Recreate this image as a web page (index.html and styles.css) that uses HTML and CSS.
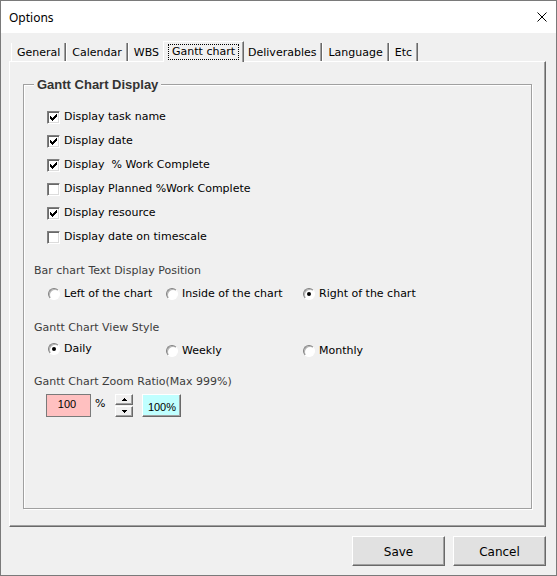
FILE: index.html
```html
<!DOCTYPE html>
<html lang="en">
<head>
<meta charset="utf-8">
<title>Options</title>
<link rel="stylesheet" href="styles.css">
</head>
<body>
<div class="window">
  <div class="titlebar">
    <span class="title">Options</span>
    <svg class="close" width="10" height="10" viewBox="0 0 10 10"><path d="M0.5 0.5L9.5 9.5M9.5 0.5L0.5 9.5" stroke="#000" stroke-width="1" fill="none"/></svg>
  </div>
  <div class="client">
    <div class="tabs">
      <div class="tab">General</div>
      <div class="tab">Calendar</div>
      <div class="tab">WBS</div>
      <div class="tab tab-active"><span class="tab-focus">Gantt chart</span></div>
      <div class="tab">Deliverables</div>
      <div class="tab">Language</div>
      <div class="tab">Etc</div>
    </div>
    <div class="page">
      <div class="frame">
        <div class="frame-title">Gantt Chart Display</div>
        <div class="checks">
          <div class="check-row"><span class="checkbox"><svg class="tick" width="11" height="11" viewBox="0 0 11 11"><path d="M2.5 4v3M3.5 5v3M4.5 6v3M5.5 5v3M6.5 4v3M7.5 3v3M8.5 2v3" stroke="#000" stroke-width="1"/></svg></span><span>Display task name</span></div>
          <div class="check-row"><span class="checkbox"><svg class="tick" width="11" height="11" viewBox="0 0 11 11"><path d="M2.5 4v3M3.5 5v3M4.5 6v3M5.5 5v3M6.5 4v3M7.5 3v3M8.5 2v3" stroke="#000" stroke-width="1"/></svg></span><span>Display date</span></div>
          <div class="check-row"><span class="checkbox"><svg class="tick" width="11" height="11" viewBox="0 0 11 11"><path d="M2.5 4v3M3.5 5v3M4.5 6v3M5.5 5v3M6.5 4v3M7.5 3v3M8.5 2v3" stroke="#000" stroke-width="1"/></svg></span><span>Display&nbsp; % Work Complete</span></div>
          <div class="check-row"><span class="checkbox"></span><span>Display Planned %Work Complete</span></div>
          <div class="check-row"><span class="checkbox"><svg class="tick" width="11" height="11" viewBox="0 0 11 11"><path d="M2.5 4v3M3.5 5v3M4.5 6v3M5.5 5v3M6.5 4v3M7.5 3v3M8.5 2v3" stroke="#000" stroke-width="1"/></svg></span><span>Display resource</span></div>
          <div class="check-row"><span class="checkbox"></span><span>Display date on timescale</span></div>
        </div>

        <div class="section-label label-bar">Bar chart Text Display Position</div>
        <div class="radio-row row-bar">
          <div class="radio-item"><span class="radio"></span><span>Left of the chart</span></div>
          <div class="radio-item"><span class="radio"></span><span>Inside of the chart</span></div>
          <div class="radio-item"><span class="radio is-checked"></span><span>Right of the chart</span></div>
        </div>

        <div class="section-label label-view">Gantt Chart View Style</div>
        <div class="radio-row row-view">
          <div class="radio-item"><span class="radio is-checked"></span><span>Daily</span></div>
          <div class="radio-item item-low"><span class="radio"></span><span>Weekly</span></div>
          <div class="radio-item item-low"><span class="radio"></span><span>Monthly</span></div>
        </div>

        <div class="section-label label-zoom">Gantt Chart Zoom Ratio(Max 999%)</div>
        <div class="zoom-row">
          <div class="zoom-input">100</div>
          <span class="zoom-unit">%</span>
          <div class="spin">
            <div class="spin-btn"><svg width="5" height="3" viewBox="0 0 5 3"><path d="M2 0h1v1h1v1h1v1H0V2h1V1h1z" fill="#000"/></svg></div>
            <div class="spin-btn"><svg width="5" height="3" viewBox="0 0 5 3"><path d="M0 0h5v1H4v1H3v1H2V2H1V1H0z" fill="#000"/></svg></div>
          </div>
          <div class="reset-btn">100%</div>
        </div>
      </div>
    </div>
    <div class="footer">
      <div class="btn">Save</div>
      <div class="btn">Cancel</div>
    </div>
  </div>
</div>
</body>
</html>
```
FILE: styles.css
```css
* { box-sizing: border-box; }

html, body {
  margin: 0;
  padding: 0;
  background: #ffffff;
}

body {
  font-family: "DejaVu Sans", sans-serif;
  font-size: 11px;
  color: #000;
}

.window {
  width: 557px;
  height: 576px;
  border: 1px solid #7a7a7a;
  background: #f0f0f0;
  display: flex;
  flex-direction: column;
}

/* ---------- title bar ---------- */
.titlebar {
  flex: none;
  height: 32px;
  background: #ffffff;
  display: flex;
  align-items: center;
  justify-content: space-between;
  padding: 0 9px 0 8px;
}

.title {
  font-family: "Noto Sans", "Open Sans", sans-serif;
  font-size: 12px;
  color: #000;
}

.close { display: block; }

/* ---------- client ---------- */
.client {
  flex: 1;
  display: flex;
  flex-direction: column;
  padding: 10px 10px 0 8px;
}

/* ---------- tabs ---------- */
.tabs {
  flex: none;
  display: flex;
  align-items: flex-start;
  height: 18px;
  margin-left: 2px;
  position: relative;
  z-index: 1;
}

.tab {
  height: 18px;
  line-height: 18px;
  padding: 1px 5px 0 5px;
  border-left: 1px solid #ffffff;
  border-right: 1px solid #696969;
  box-shadow: inset -1px 0 0 #a0a0a0;
  white-space: nowrap;
  color: #000;
}

.tab-active {
  height: 21px;
  margin: -2px -2px 0 -2px;
  padding: 2px 4px 0 4px;
  line-height: 16px;
  border-top: 1px solid #ffffff;
  background: #f0f0f0;
  position: relative;
}

.tab-focus {
  display: block;
  height: 16px;
  padding: 0 4px;
  outline: 1px dotted #000;
  outline-offset: -1px;
}

/* ---------- page ---------- */
.page {
  flex: none;
  height: 466px;
  display: flex;
  border: 1px solid;
  border-color: #ffffff #696969 #696969 #ffffff;
  box-shadow: inset -1px -1px 0 #a0a0a0;
  padding: 22px 13px 17px 13px;
}

.frame {
  flex: 1;
  border: 1px solid #a0a0a0;
  box-shadow: inset 1px 1px 0 #ffffff, 1px 1px 0 #ffffff;
  padding-left: 10px;
}

.frame-title {
  width: fit-content;
  margin-top: -7px;
  padding: 0 3px;
  height: 14px;
  line-height: 14px;
  background: #f0f0f0;
  font-family: "Liberation Sans", Arial, sans-serif;
  font-weight: bold;
  font-size: 13px;
  color: #333;
}

/* ---------- checkboxes ---------- */
.checks {
  margin-top: 13px;
  padding-left: 13px;
}

.check-row {
  height: 24px;
  display: flex;
  align-items: center;
  gap: 4px;
  line-height: 14px;
  white-space: pre;
}

.checkbox {
  flex: none;
  width: 13px;
  height: 13px;
  background: #ffffff;
  border: 1px solid;
  border-color: #808080 #ffffff #ffffff #808080;
  box-shadow: inset 1px 1px 0 #696969, inset -1px -1px 0 #dcdcdc;
  display: flex;
}

.tick { display: block; }

/* ---------- labels & radios ---------- */
.section-label {
  line-height: 14px;
  height: 14px;
  color: #3c3c3c;
}

.label-bar { margin-top: 15px; }
.label-view { margin-top: 18px; }
.label-zoom { margin-top: 17px; }

.radio-row {
  display: grid;
  grid-template-columns: 118px 137px auto;
  padding-left: 14px;
  height: 16px;
  align-items: start;
}

.row-bar { margin-top: 9px; }
.row-view { margin-top: 7px; }

.radio-item {
  display: flex;
  align-items: flex-start;
  gap: 4px;
  line-height: 14px;
}

.item-low { margin-top: 2px; }

.radio {
  flex: none;
  width: 12px;
  height: 12px;
  margin-top: 1px;
  border-radius: 50%;
  border: 1px solid;
  border-color: #808080 #ffffff #ffffff #808080;
  box-shadow: inset 1px 1px 0 #b4b4b4;
  background: #ffffff;
  display: flex;
  align-items: center;
  justify-content: center;
}

.radio.is-checked::after {
  content: "";
  width: 4px;
  height: 4px;
  border-radius: 50%;
  background: #000;
}

/* ---------- zoom controls ---------- */
.zoom-row {
  margin-top: 5px;
  padding-left: 12px;
  height: 23px;
  display: flex;
  align-items: flex-start;
}

.zoom-input {
  width: 45px;
  height: 23px;
  border: 1px solid #7a7a7a;
  background: #ffc0c0;
  font-family: "Liberation Sans", Arial, sans-serif;
  font-size: 11px;
  line-height: 18px;
  text-align: center;
  padding-right: 3px;
}

.zoom-unit {
  margin-left: 4px;
  margin-top: 3px;
  line-height: 14px;
}

.spin {
  margin-left: 10px;
  width: 18px;
  height: 23px;
  display: flex;
  flex-direction: column;
  gap: 1px;
}

.spin-btn {
  height: 11px;
  background: #f0f0f0;
  border: 1px solid;
  border-color: #ffffff #696969 #696969 #ffffff;
  box-shadow: inset -1px -1px 0 #a0a0a0;
  display: flex;
  align-items: center;
  justify-content: center;
}

.spin-btn svg { display: block; }

.reset-btn {
  margin-left: 9px;
  width: 39px;
  height: 23px;
  background: #c0ffff;
  border: 1px solid;
  border-color: #ffffff #696969 #696969 #ffffff;
  box-shadow: inset -1px -1px 0 #a0a0a0;
  font-family: "Liberation Sans", Arial, sans-serif;
  font-size: 11px;
  line-height: 14px;
  padding-top: 5px;
  text-align: center;
}

/* ---------- footer ---------- */
.footer {
  flex: none;
  margin-top: 9px;
  display: flex;
  justify-content: flex-end;
  gap: 8px;
}

.btn {
  width: 93px;
  height: 30px;
  background: #e1e1e1;
  border: 1px solid;
  border-color: #ffffff #696969 #696969 #ffffff;
  box-shadow: inset -1px -1px 0 #a0a0a0;
  font-size: 12px;
  padding-top: 2px;
  line-height: 27px;
  text-align: center;
  color: #000;
}
```
